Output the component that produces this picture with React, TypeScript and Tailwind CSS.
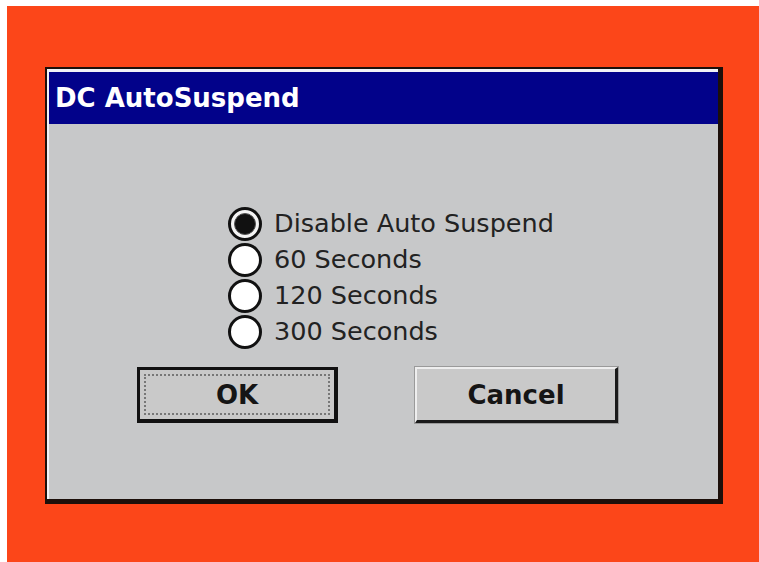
import React from "react";

function Radio({ checked }: { checked?: boolean }) {
  return (
    <svg width="36" height="36" viewBox="0 0 36 36" className="shrink-0">
      <circle cx="18" cy="18" r="15.5" fill={checked ? "#f4f4f4" : "#ffffff"} stroke="#111111" strokeWidth="3" />
      {checked && <circle cx="18" cy="18" r="10.5" fill="#111111" stroke="#555555" strokeWidth="1" />}
    </svg>
  );
}

const options = [
  { label: "Disable Auto Suspend", checked: true },
  { label: "60 Seconds" },
  { label: "120 Seconds" },
  { label: "300 Seconds" },
];

export default function App() {
  return (
    <div className="w-screen h-screen min-w-[759px] min-h-[562px] bg-white pl-[7px] pt-[6px] font-['DejaVu_Sans',sans-serif] overflow-hidden">
      <div className="h-full w-full bg-[#fc4619] pl-[38px] pt-[61px]">
        <div className="w-[678px] h-[437px] border-t-[2px] border-l-[2px] border-r-[5px] border-b-[5px] border-[#1c0f0a] flex">
          <div className="flex-1 flex flex-col border-t-[3px] border-l-[2px] border-[#f2f2f6]">
            <div className="h-[52px] bg-[#02028a] flex items-center pl-[6px]">
              <span className="text-white font-bold text-[26px] leading-none">DC AutoSuspend</span>
            </div>
            <div className="flex-1 bg-[#c7c8c9] flex flex-col pt-[82px]">
              <div className="flex flex-col ml-[178px]">
                {options.map((o) => (
                  <div key={o.label} className="h-[36px] flex items-center gap-[11px]">
                    <Radio checked={o.checked} />
                    <span className="text-[25.5px] leading-none text-[#222222]">{o.label}</span>
                  </div>
                ))}
              </div>
              <div className="flex mt-[17px] ml-[88px] gap-[77px]">
                <button className="w-[201px] h-[56px] border-t-[3px] border-l-[3px] border-b-[4px] border-r-[4px] border-[#111111] bg-[#c9c9c9] p-[4px]">
                  <div className="h-full w-full border-[2px] border-dotted border-[#777777] flex items-center justify-center">
                    <span className="text-[26px] font-bold leading-none text-[#151515]">OK</span>
                  </div>
                </button>
                <button className="w-[203px] h-[56px] border-t-[2px] border-l-[2px] border-t-[#eeeeee] border-l-[#eeeeee] border-b-[3px] border-r-[3px] border-b-[#1a1a1a] border-r-[#1a1a1a] bg-[#c9c9c9] flex items-center justify-center outline outline-1 outline-[#9a9a9a]">
                  <span className="text-[26px] font-bold leading-none text-[#151515]">Cancel</span>
                </button>
              </div>
            </div>
          </div>
        </div>
      </div>
    </div>
  );
}
